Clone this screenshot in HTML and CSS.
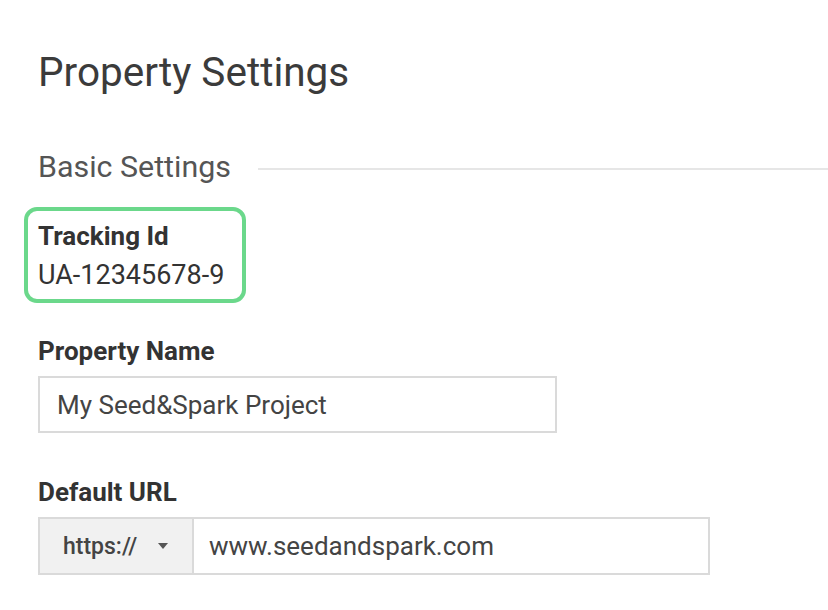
FILE: index.html
```html
<!DOCTYPE html>
<html>
<head>
<meta charset="utf-8">
<link rel="stylesheet" href="styles.css">
</head>
<body>
<div class="page">
  <h1 class="title">Property Settings</h1>
  <div class="section-head">
    <span class="section-title">Basic Settings</span>
    <span class="rule"></span>
  </div>
  <div class="tracking">
    <div class="label">Tracking Id</div>
    <div class="value">UA-12345678-9</div>
  </div>
  <div class="field field-name">
    <div class="label">Property Name</div>
    <div class="input name-input">My Seed&amp;Spark Project</div>
  </div>
  <div class="field field-url">
    <div class="label">Default URL</div>
    <div class="url-group">
      <div class="proto">https:// <span class="caret"></span></div>
      <div class="url">www.seedandspark.com</div>
    </div>
  </div>
</div>
</body>
</html>
```
FILE: styles.css
```css
* { box-sizing: border-box; }
html, body { margin: 0; padding: 0; background: #fff; }
body { font-family: Roboto, "Liberation Sans", sans-serif; color: #333; }
.page { padding: 48px 0 0 38px; }
.title { margin: 0; font-weight: 400; font-size: 40.5px; line-height: 48px; color: #3b3b3b; }
.section-head { display: flex; align-items: center; margin-top: 53px; height: 36px; }
.section-title { font-size: 30.4px; line-height: 36px; color: #555; }
.rule { flex: 1; height: 2px; background: #e6e6e6; margin-left: 27px; margin-top: 4px; }
.tracking { margin: 22px 0 0 -14px; width: 222px; border: 4px solid #6bd88b; border-radius: 13px; padding: 9px 10px 6px 10px; }
.label { font-weight: 700; font-size: 26px; color: #333; line-height: 32px; }
.value { font-size: 27px; line-height: 36px; color: #333; margin-top: 5px; }
.field-name { margin-top: 32px; }
.field-url { margin-top: 43px; }
.field .label { margin-bottom: 9px; }
.input { border: 2px solid #dadada; height: 57px; display: flex; align-items: center; padding-left: 17px; font-size: 26px; color: #444; }
.name-input { width: 519px; }
.url-group { display: flex; width: 672px; height: 58px; border: 2px solid #dadada; }
.proto { width: 154px; background: #f1f1f1; border-right: 2px solid #dadada; display: flex; align-items: center; padding-left: 23px; font-size: 23px; color: #444; font-weight: 500; }
.caret { width: 0; height: 0; border-left: 5.5px solid transparent; border-right: 5.5px solid transparent; border-top: 6px solid #555; margin-left: 21px; }
.url { flex: 1; display: flex; align-items: center; padding-left: 15px; font-size: 26px; color: #444; }
```
